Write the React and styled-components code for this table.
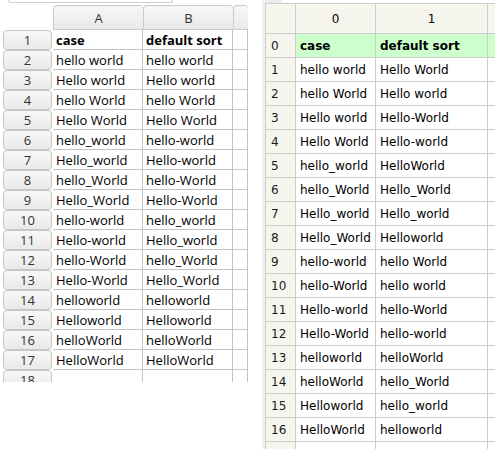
import React from 'react';
import styled, { createGlobalStyle } from 'styled-components';

const leftRows = [
  ['case', 'default sort'],
  ['hello world', 'hello world'],
  ['Hello world', 'Hello world'],
  ['hello World', 'hello World'],
  ['Hello World', 'Hello World'],
  ['hello_world', 'hello-world'],
  ['Hello_world', 'Hello-world'],
  ['hello_World', 'hello-World'],
  ['Hello_World', 'Hello-World'],
  ['hello-world', 'hello_world'],
  ['Hello-world', 'Hello_world'],
  ['hello-World', 'hello_World'],
  ['Hello-World', 'Hello_World'],
  ['helloworld', 'helloworld'],
  ['Helloworld', 'Helloworld'],
  ['helloWorld', 'helloWorld'],
  ['HelloWorld', 'HelloWorld'],
  ['', ''],
];

const rightRows = [
  ['case', 'default sort'],
  ['hello world', 'Hello World'],
  ['hello World', 'Hello world'],
  ['Hello world', 'Hello-World'],
  ['Hello World', 'Hello-world'],
  ['hello_world', 'HelloWorld'],
  ['hello_World', 'Hello_World'],
  ['Hello_world', 'Hello_world'],
  ['Hello_World', 'Helloworld'],
  ['hello-world', 'hello World'],
  ['hello-World', 'hello world'],
  ['Hello-world', 'hello-World'],
  ['Hello-World', 'hello-world'],
  ['helloworld', 'helloWorld'],
  ['helloWorld', 'hello_World'],
  ['Helloworld', 'hello_world'],
  ['HelloWorld', 'helloworld'],
  ['', ''],
];

export default function App() {
  return (
    <>
      <GlobalStyle />
      <Page>
        <Calc>
          <NameBoxEdge />
          <Sheet>
            <Corner />
            <ColHead>A</ColHead>
            <ColHead>B</ColHead>
            <ColHead />
            {leftRows.map((row, i) => (
              <React.Fragment key={i}>
                <RowHead>{i + 1}</RowHead>
                <Cell bold={i === 0}>{row[0]}</Cell>
                <Cell bold={i === 0}>{row[1]}</Cell>
                <Cell />
              </React.Fragment>
            ))}
          </Sheet>
        </Calc>
        <Frame>
          <Table>
            <colgroup>
              <col style={{ width: 30 }} />
              <col style={{ width: 80 }} />
              <col style={{ width: 112 }} />
              <col style={{ width: 40 }} />
            </colgroup>
            <thead>
              <tr>
                <Th />
                <Th center>0</Th>
                <Th center>1</Th>
                <Th />
              </tr>
            </thead>
            <tbody>
              {rightRows.map((row, i) => (
                <tr key={i}>
                  <IndexCell>{i < 17 ? i : ''}</IndexCell>
                  <Td header={i === 0}>{row[0]}</Td>
                  <Td header={i === 0}>{row[1]}</Td>
                  <Td header={i === 0} />
                </tr>
              ))}
            </tbody>
          </Table>
        </Frame>
      </Page>
    </>
  );
}

const GlobalStyle = createGlobalStyle`
  html, body {
    margin: 0;
    padding: 0;
    background: #ffffff;
  }
`;

const Page = styled.div`
  display: flex;
  width: 495px;
  height: 452px;
  overflow: hidden;
  background: #ffffff;
`;

const Calc = styled.div`
  width: 248px;
  height: 382px;
  padding-left: 3px;
  box-sizing: border-box;
  overflow: hidden;
  flex-shrink: 0;
  font-family: 'Open Sans', 'Noto Sans', sans-serif;
  font-size: 13px;
`;

const NameBoxEdge = styled.div`
  width: 165px;
  height: 3px;
  margin-left: 5px;
  margin-bottom: 2px;
  border: 1px solid #cfcfcf;
  border-top: none;
  border-radius: 0 0 5px 5px;
  box-sizing: border-box;
`;

const Sheet = styled.div`
  display: grid;
  grid-template-columns: 50px 90px 90px 15px;
  grid-template-rows: 25px;
  grid-auto-rows: 20px;
`;

const Corner = styled.div``;

const ColHead = styled.div`
  display: flex;
  align-items: center;
  justify-content: center;
  border: 1px solid #cacaca;
  border-right: none;
  border-radius: 4px 4px 0 0;
  background: linear-gradient(#f7f7f7, #e9e9e9);
  color: #333333;
  font-size: 13px;
  &:last-child {
    border-right: 1px solid #cacaca;
  }
`;

const RowHead = styled.div`
  display: flex;
  align-items: center;
  justify-content: center;
  border: 1px solid #c6c6c6;
  border-radius: 4px;
  background: linear-gradient(#f8f8f8, #e9e9e9);
  color: #333333;
  margin-right: 1px;
  box-sizing: border-box;
`;

const Cell = styled.div`
  display: flex;
  align-items: center;
  padding-left: 3px;
  border-right: 1px solid #c4c4c4;
  border-bottom: 1px solid #c4c4c4;
  color: #000000;
  font-weight: ${({ bold }) => (bold ? 700 : 400)};
  white-space: nowrap;
  overflow: hidden;
`;

const Frame = styled.div`
  margin-left: 14px;
  height: 449px;
  flex: 1;
  overflow: hidden;
  border-left: 3px solid #f0f0f0;
  padding-top: 3px;
  box-sizing: border-box;
  position: relative;
  &::before {
    content: '';
    position: absolute;
    left: -3px;
    top: 0;
    width: 20px;
    height: 3px;
    background: #ececec;
  }
`;

const Table = styled.table`
  border-collapse: collapse;
  table-layout: fixed;
  width: 262px;
  font-family: 'DejaVu Sans', Verdana, sans-serif;
  font-size: 12px;
  color: #000000;
`;

const Th = styled.th`
  height: 29px;
  padding: 0 5px;
  border: 1px solid #cccccc;
  background: #f7f6ee;
  font-weight: 400;
  text-align: ${({ center }) => (center ? 'center' : 'left')};
`;

const IndexCell = styled.td`
  height: 23px;
  padding: 0 5px;
  border: 1px solid #cccccc;
  background: #f7f6ee;
  color: #1a1a1a;
`;

const Td = styled.td`
  height: 23px;
  padding: 0 4px;
  border: 1px solid #cccccc;
  background: ${({ header }) => (header ? '#ccffcc' : '#ffffff')};
  font-weight: ${({ header }) => (header ? 700 : 400)};
  white-space: nowrap;
  overflow: hidden;
`;
